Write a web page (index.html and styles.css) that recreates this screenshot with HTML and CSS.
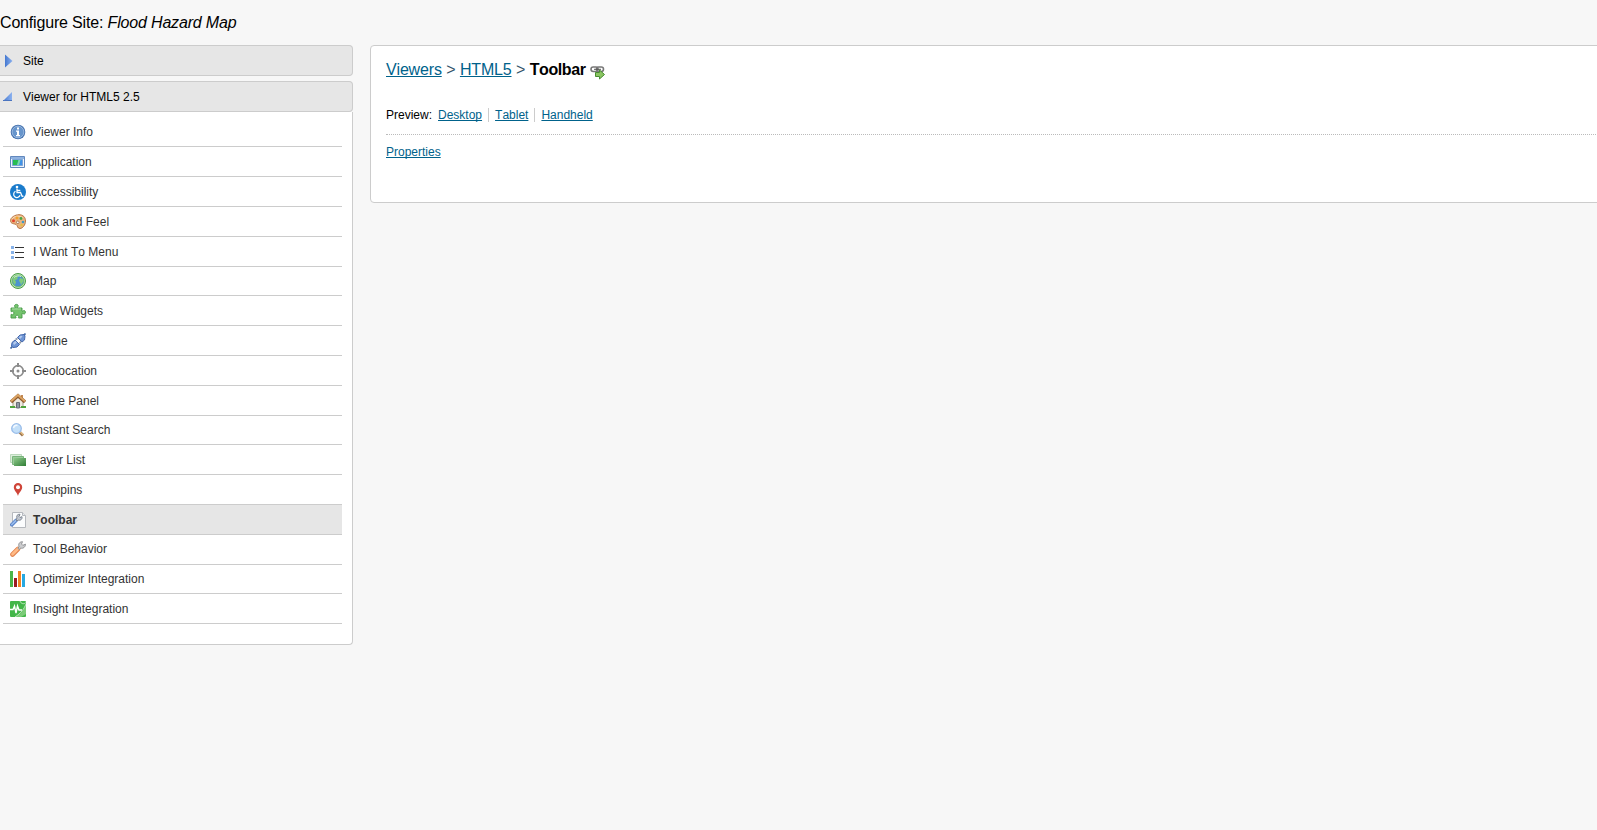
FILE: index.html
```
<!DOCTYPE html>
<html lang="en">
<head>
    <meta charset="utf-8">
    <title>Configure Site: Flood Hazard Map</title>
    <link rel="stylesheet" href="styles.css">
</head>
<body>
    <h1 class="page-title">Configure Site: <em>Flood Hazard Map</em></h1>
    <div class="layout">
        <div class="sidebar">
            <div class="section-header">
                <svg class="arrow" width="16" height="16" viewBox="0 0 16 16"><path d="M5 1.500l7.500 6.500L5 14.500z" fill="url(#blue)"/></svg>
                Site
            </div>
            <div class="section-header open">
                <svg class="arrow" width="16" height="16" viewBox="0 0 16 16"><path d="M12 3v9H3z" fill="url(#blue)"/><path d="M3 11.500h9" stroke="#4a74c0"/></svg>
                Viewer for HTML5 2.5
            </div>
            <ul class="menu">
                <li>
                    <svg width="16" height="16" viewBox="0 0 16 16"><circle cx="8" cy="8" r="7.300" fill="#426fac"/><circle cx="8" cy="8" r="5.900" fill="#6795cc" stroke="#a3c0e4" stroke-width=".9"/><path d="M7 3.500h2v2H7zM6 6.500h3V11h1v1.200H6V11h1V7.700H6z" fill="#fff"/></svg>
                    Viewer Info
                </li>
                <li>
                    <svg width="16" height="16" viewBox="0 0 16 16"><path d="M.500 2.500h14v11H.500z" fill="#eef4fb" stroke="#6288bd"/><path d="M1 3h13v2H1z" fill="#8fb2e0"/><path d="M2.500 5.500h10v6h-10z" fill="#3e91e8" stroke="#7ba5d6"/><path d="M3 6h5.500L7 11H3z" fill="#27bd50"/><path d="M8.500 6h2L9 11H7z" fill="#7ddba7"/></svg>
                    Application
                </li>
                <li>
                    <svg width="16" height="16" viewBox="0 0 16 16"><circle cx="8" cy="8" r="8" fill="#1a7bcb"/><circle cx="7" cy="3" r="1.300" fill="#fff"/><path d="M7 4.500v4h3.500l1.700 4 1.300-.500M7.300 6.300h3" fill="none" stroke="#fff" stroke-width="1.300"/><path d="M5.500 7.300a3.300 3.300 0 1 0 4.600 4" fill="none" stroke="#fff" stroke-width="1.200"/></svg>
                    Accessibility
                </li>
                <li>
                    <svg width="16" height="16" viewBox="0 0 16 16"><path d="M9 .700c4 0 6.500 2.500 6.500 6.300 0 4-3 7.500-5.500 7.500-3 0-2-3-4-4C4 9.500.500 10 .500 6.500.500 3.500 5 .700 9 .700z" fill="#e8b47f" stroke="#b97443"/><path d="M2 5c2-3 7-4 11-1" fill="none" stroke="#f7d9b6"/><circle cx="3.500" cy="6.800" r="1.500" fill="#e5432d"/><circle cx="7" cy="4" r="1.400" fill="#f2a32d"/><circle cx="11" cy="4.500" r="1.400" fill="#48a745"/><circle cx="13" cy="8" r="1.300" fill="#3f9ac5"/><circle cx="7.800" cy="8.300" r="1.300" fill="#fff" stroke="#9c6540" stroke-width=".8"/><circle cx="11.500" cy="11" r="1.200" fill="#e4c23e"/></svg>
                    Look and Feel
                </li>
                <li>
                    <svg width="16" height="16" viewBox="0 0 16 16"><path d="M1 2h3v3H1zM1 7h3v3H1zM1 12h3v3H1z" fill="#86b1e8"/><path d="M5 3.500h9M5 8.500h9M5 13.500h9" stroke="#333"/></svg>
                    I Want To Menu
                </li>
                <li>
                    <svg width="16" height="16" viewBox="0 0 16 16"><circle cx="8" cy="8" r="7.500" fill="#b7e2ad" stroke="#489c48"/><circle cx="8" cy="8" r="5.800" fill="#4c93cf" stroke="#66b463" stroke-width=".7"/><path d="M3 6c1-3 4-4 6-3.500L7 5l1 1-3 1 1 2-1 3C4 11 2.500 9 3 6zM10 5l3 1 .5 2-2.500 4-1-3-1-1z" fill="#80cb7a"/><path d="M4 4.500c2-2 5-2 7-1" fill="none" stroke="#d5f0d1"/></svg>
                    Map
                </li>
                <li>
                    <svg width="16" height="16" viewBox="0 0 16 16"><path d="M1 5h4c.500-1-.700-1.200-.500-2.500C5 1 8 1 8.200 2.500 8.300 3.800 7 4 7.500 5H12v3c1 .500 1.300-.700 2.300-.500 1.500.500 1.500 3 0 3.500-1 .200-1.300-1-2.300-.500V15H8.500c-.500-1 .500-1 .200-2-.500-1-2.500-1-3 0-.300 1 .800 1 .300 2H1v-3.500c1-.500 1 .500 2 .300 1.200-.500 1.200-3 0-3.500-1-.300-1 .700-2 .200z" fill="#74c36d" stroke="#439743" stroke-width=".9"/><path d="M2 6h9" stroke="#a9dda2"/></svg>
                    Map Widgets
                </li>
                <li>
                    <svg width="16" height="16" viewBox="0 0 16 16"><path d="M.500 15.500l3-3M12.500 3.500l3-3" stroke="#4068a5" stroke-width="1.600"/><path d="M2 9.500l3-2.500 4.500 4.500L7 14l-4 .500L1.500 13zM7.500 4.500L10 2l4-.500L15 3l-.500 4L12 9z" fill="#6f95d4" stroke="#4468ad"/><path d="M3 10l2.500-2 1.500 1.500-3 2.500zM9 4l2-1.500 1.500 1L10 6z" fill="#b5cbed"/><path d="M5.500 6.500l2-1M9.500 10.500l1.500-2" stroke="#8f99a8" stroke-width="1.700"/></svg>
                    Offline
                </li>
                <li>
                    <svg width="16" height="16" viewBox="0 0 16 16"><circle cx="8" cy="8" r="5.300" fill="none" stroke="#8b8b8b" stroke-width="1.700"/><path d="M8 0v4M8 12v4M0 8h4M12 8h4" stroke="#8b8b8b" stroke-width="2"/><circle cx="8" cy="8" r="1.500" fill="#8b8b8b"/></svg>
                    Geolocation
                </li>
                <li>
                    <svg width="16" height="16" viewBox="0 0 16 16"><path d="M3 7l5-4.500L13 7v7.500H3z" fill="#eee9df" stroke="#a79b8c"/><path d="M11 2h2v4h-2z" fill="#c48954"/><path d="M1 9l7-6.300L15 9" fill="none" stroke="#915b2c" stroke-width="3.400"/><path d="M1 8.300l7-6.300 7 6.300" fill="none" stroke="#dba464" stroke-width="2"/><path d="M6.500 9.500h3V15h-3z" fill="#9299a5" stroke="#686c76"/><path d="M0 13h5v2H0zM11 13h5v2h-5z" fill="#4fa33d"/></svg>
                    Home Panel
                </li>
                <li>
                    <svg width="16" height="16" viewBox="0 0 16 16"><path d="M9.500 10l3.500 3.500" stroke="#9d754b" stroke-width="3"/><path d="M10 9.500l3.500 3.500" stroke="#e5bc83" stroke-width="1.200"/><circle cx="6.500" cy="6.500" r="4.800" fill="#c3dff8" stroke="#98bce9" stroke-width="1.300"/><path d="M3.500 6c.500-2 2-3 4-2.500" fill="none" stroke="#f1f8ff" stroke-width="1.500"/></svg>
                    Instant Search
                </li>
                <li>
                    <svg width="16" height="16" viewBox="0 0 16 16"><path d="M.500 2.500h11v8H.500z" fill="#dcefdc" stroke="#bdd9bd"/><path d="M2.500 4.500h11v8h-11z" fill="#9acb9a" stroke="#79b47c"/><path d="M4 6h12v8H4z" fill="url(#green)"/></svg>
                    Layer List
                </li>
                <li>
                    <svg width="16" height="16" viewBox="0 0 16 16"><path d="M8 14C7.500 11 3.800 8.500 3.800 5.200a4.200 4.200 0 0 1 8.400 0C12.200 8.500 8.500 11 8 14z" fill="#cf4539"/><circle cx="8" cy="5.200" r="2" fill="#fff"/></svg>
                    Pushpins
                </li>
                <li class="selected">
                    <svg width="16" height="16" viewBox="0 0 16 16"><path d="M2.500.500h10l3 3v12h-13z" fill="#fbfcfd" stroke="#b5b8bd"/><path d="M12.500.500v3h3" fill="#e5e8ec" stroke="#b5b8bd"/><path d="M1.800 12.700L6 8.500" stroke="#5983c8" stroke-width="3.600" stroke-linecap="round"/><path d="M1.800 12.500L6 8.300" stroke="#98bbec" stroke-width="1.700" stroke-linecap="round"/><path d="M6 8l1-2C6 4 7.500 2 10 2.300L9 4.500l1 1 2-.800C12.500 7 10.500 9 8 8L7 9z" fill="#c3c8d0" stroke="#7e8692"/></svg>
                    Toolbar
                </li>
                <li>
                    <svg width="16" height="16" viewBox="0 0 16 16"><path d="M2.500 13.500L8 8" stroke="#e28450" stroke-width="4.600" stroke-linecap="round"/><path d="M2.500 13.300L8 7.800" stroke="#ffba86" stroke-width="2.700" stroke-linecap="round"/><path d="M8 7.500l1-2C8 3 9.500.700 12.500.700L11.500 3l1.300 1.300L15.500 3.200C15.500 6 13 8 10.500 7L9.500 8.500z" fill="#cccdcf" stroke="#8b8c8e" stroke-width=".9"/></svg>
                    Tool Behavior
                </li>
                <li>
                    <svg width="16" height="16" viewBox="0 0 16 16"><path d="M0 0h3v16H0z" fill="#4ab548"/><path d="M4 7h3v9H4z" fill="#9b1c22"/><path d="M8 0h3v16H8z" fill="#f58220"/><path d="M12 3h3v13h-3z" fill="#27a9e1"/></svg>
                    Optimizer Integration
                </li>
                <li>
                    <svg width="16" height="16" viewBox="0 0 16 16"><rect width="16" height="16" rx="1" fill="#43b649"/><path d="M16 3v10l-5 3H5c6-3 9-7 11-13z" fill="#7bcb78"/><path d="M0 8.500h3L4.500 5 6 12l1.500-7L9 9h3" fill="none" stroke="#fff" stroke-width="1.400"/><path d="M10 0c1 3 4 3.500 6 1.500M16 3C14 8 11 12 5 16" fill="none" stroke="#d5f0d4" stroke-width=".8"/></svg>
                    Insight Integration
                </li>
            </ul>
        </div>
        <div class="content">
            <h2 class="breadcrumb">
                <a href="#">Viewers</a> <span>&gt;</span> <a href="#">HTML5</a> <span>&gt;</span> <strong>Toolbar</strong>
                <svg class="link-icon" width="16" height="16" viewBox="0 0 16 16"><rect x="1" y="3" width="7" height="4.500" rx="2.200" fill="none" stroke="#777" stroke-width="1.600"/><rect x="6.500" y="3" width="7" height="4.500" rx="2.200" fill="none" stroke="#777" stroke-width="1.600"/><path d="M4 5.300h7" stroke="#555"/><path d="M5.500 8.500h4V6l5 4.500-5 4.500v-2.500h-4z" fill="#8bc562" stroke="#478c31"/></svg>
            </h2>
            <div class="preview">
                <span class="label">Preview:</span>
                <a href="#">Desktop</a>
                <a href="#">Tablet</a>
                <a href="#">Handheld</a>
            </div>
            <a class="properties" href="#">Properties</a>
        </div>
    </div>
    <!-- shared gradients -->
    <svg class="defs" width="0" height="0">
        <linearGradient id="blue"><stop stop-color="#4478d0"/><stop offset="1" stop-color="#8db2ef"/></linearGradient>
        <linearGradient id="green" x2="1" y2="1"><stop stop-color="#8fca8b"/><stop offset="1" stop-color="#2f7d35"/></linearGradient>
    </svg>
</body>
</html>
```
FILE: styles.css
```
* {
    box-sizing: border-box;
}
body {
    margin: 0;
    font-family: "Liberation Sans", Arial, sans-serif;
    font-size: 12px;
    font-kerning: none;
    color: #000;
    background-color: #f7f7f7;
    overflow: hidden;
}
a {
    color: #00628b;
    text-decoration: underline;
    text-decoration-skip-ink: none;
}
.page-title {
    margin: 0;
    padding-top: 13px;
    height: 45px;
    font-size: 16px;
    font-weight: normal;
    line-height: 19px;
    letter-spacing: -0.17px;
}
.layout {
    display: flex;
    align-items: flex-start;
    gap: 17px;
}
.sidebar {
    flex: 0 0 353px;
}
.section-header {
    display: flex;
    align-items: center;
    height: 31px;
    margin-bottom: 5px;
    border: 1px solid #ccc;
    border-left: 0;
    border-radius: 0 4px 4px 0;
    background-color: #e6e6e6;
}
.section-header.open {
    margin-bottom: 0;
}
.arrow {
    margin-right: 7px;
}
.menu {
    margin: 0;
    padding: 5.6px 10px 20px 3px;
    list-style: none;
    background-color: #fff;
    border: 1px solid #ccc;
    border-width: 0 1px 1px 0;
    border-radius: 0 0 4px 0;
}
.menu li {
    display: flex;
    align-items: center;
    gap: 7px;
    height: 29.8px;
    padding-top: 0.7px;
    padding-left: 7px;
    border-bottom: 1px solid #ccc;
    color: #333;
    line-height: 14px;
}
.menu li.selected {
    background-color: #e6e6e6;
    font-weight: bold;
}
.content {
    flex: 0 0 1300px;
    height: 158px;
    padding: 15px;
    background-color: #fff;
    border: 1px solid #ccc;
    border-radius: 4px;
}
.breadcrumb {
    display: flex;
    gap: 4.5px;
    margin: 0;
    height: 43px;
    font-size: 16px;
    font-weight: normal;
    line-height: 18px;
    letter-spacing: -0.17px;
}
.breadcrumb span {
    color: #33546a;
}
.breadcrumb strong {
    letter-spacing: -0.4px;
}
.link-icon {
    margin-top: 3px;
}
.preview {
    display: flex;
    height: 31px;
    padding-top: 4px;
    margin-bottom: 10px;
    border-bottom: 1px dotted #bbb;
    line-height: 14px;
}
.preview .label {
    margin-right: 6px;
}
.preview a {
    height: 14px;
}
.preview a + a {
    margin-left: 6px;
    padding-left: 6px;
    border-left: 1px solid #ccc;
}
.properties {
    line-height: 14px;
}
.defs {
    position: absolute;
}
```
